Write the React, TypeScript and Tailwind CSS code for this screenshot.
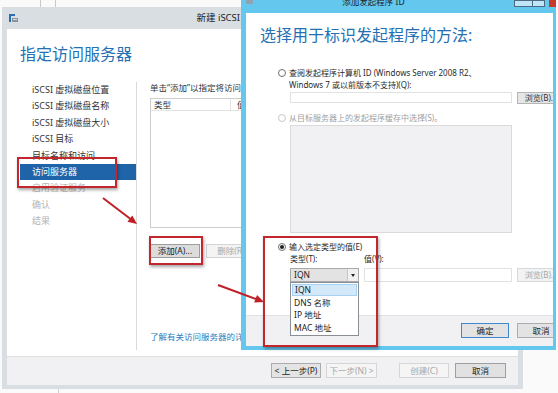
import React from "react";

function Radio({ on, dim }: { on?: boolean; dim?: boolean }) {
  return (
    <span
      className={
        dim
          ? "mt-[2px] w-[8px] h-[8px] rounded-full border border-[#c9c9c9] bg-white flex items-center justify-center flex-none"
          : "mt-[2px] w-[8px] h-[8px] rounded-full border border-[#707070] bg-white flex items-center justify-center flex-none"
      }
    >
      {on && <span className="w-[4px] h-[4px] rounded-full bg-[#1e1e1e]" />}
    </span>
  );
}

export default function App() {
  const navItems = [
    { t: "iSCSI 虚拟磁盘位置" },
    { t: "iSCSI 虚拟磁盘名称" },
    { t: "iSCSI 虚拟磁盘大小" },
    { t: "iSCSI 目标" },
    { t: "目标名称和访问" },
    { t: "访问服务器", sel: true },
    { t: "启用验证服务", dim: true },
    { t: "确认", dim: true },
    { t: "结果", dim: true },
  ];

  return (
    <div className="relative w-[558px] h-[393px] overflow-hidden bg-[#fafafa] font-['Noto_Sans','Noto_Sans_CJK_SC',sans-serif] text-[#1e1e1e]">
      {/* background marks */}
      <div className="absolute left-[40px] top-0 w-px h-[7px] bg-[#c8c8c8]" />
      <div className="absolute left-[55px] top-0 w-px h-[7px] bg-[#c8c8c8]" />
      <div className="absolute left-[58px] top-[389px] w-px h-[4px] bg-[#d0d0d0]" />

      {/* Main wizard window */}
      <div className="absolute left-[2px] top-[7px] w-[521px] h-[382px] bg-[#d9dee3] flex flex-col">
        <div className="h-[22px] flex items-center pl-[7px]">
          <svg width="10" height="9" viewBox="0 0 10 9" className="flex-none">
            <rect x="0" y="0" width="2" height="8" fill="#2a6fb5" />
            <rect x="0" y="0" width="6" height="2" fill="#2a6fb5" />
            <rect x="3" y="4" width="6" height="4" fill="#8a949e" />
            <rect x="4" y="5" width="4" height="1" fill="#d8dde2" />
          </svg>
          <div className="flex-1 text-center pr-[46px] text-[9.5px] leading-[12px] text-[#222]">
            新建 iSCSI 虚拟磁盘向导
          </div>
        </div>
        <div className="flex-1 mx-[5px] mb-[4px] bg-white flex flex-col">
          <div className="flex-1 flex flex-col pl-[13px]">
            <div className="h-[53px] pt-[15px] text-[16px] leading-[20px] text-[#2470b3]">
              指定访问服务器
            </div>
            <div className="flex h-[268px]">
              <div className="w-[117px] flex-none border-r border-[#dadada] flex flex-col">
                {navItems.map((n) => (
                  <div
                    key={n.t}
                    className={
                      n.sel
                        ? "h-[16.4px] leading-[16.4px] pl-[12px] text-[9px] bg-[#1f64a8] text-white"
                        : n.dim
                        ? "h-[16.4px] leading-[16.4px] pl-[12px] text-[9px] text-[#b4b4b4]"
                        : "h-[16.4px] leading-[16.4px] pl-[12px] text-[9px] text-[#333]"
                    }
                  >
                    {n.t}
                  </div>
                ))}
              </div>
              <div className="flex-1 flex flex-col pl-[13px] overflow-hidden">
                <div className="h-[12px] leading-[12px] text-[8.5px] text-[#333] whitespace-nowrap">
                  单击“添加”以指定将访问此 iSCSI 虚拟磁盘的 iSCSI 发起程序。
                </div>
                <div className="mt-[4px] w-[360px] h-[130px] flex-none border border-[#cdcdcd] bg-white">
                  <div className="flex h-[12px] border-b border-[#e3e3e3] text-[8.5px] leading-[11px] text-[#333]">
                    <div className="w-[80px] pl-[3px] border-r border-[#e3e3e3]">类型</div>
                    <div className="pl-[6px]">值</div>
                  </div>
                </div>
                <div className="mt-[16px] flex gap-[6px]">
                  <div className="w-[50px] h-[14px] flex-none border border-[#9d9d9d] bg-[#dcdcdc] text-[8.5px] leading-[12px] text-center text-[#222]">
                    添加(A)...
                  </div>
                  <div className="w-[50px] h-[14px] flex-none border border-[#d4d4d4] bg-[#f4f4f4] text-[8.5px] leading-[12px] text-center text-[#a8a8a8]">
                    删除(R)
                  </div>
                </div>
                <div className="flex-1" />
                <div className="mb-[7px] h-[12px] leading-[12px] text-[8.5px] text-[#2b7bbd] whitespace-nowrap">
                  了解有关访问服务器的详细信息
                </div>
              </div>
            </div>
            <div className="h-[6px]" />
          </div>
          <div className="h-[29px] flex-none bg-[#f1f0f2] border-t border-[#dedede] flex justify-end items-start pt-[6px] pr-[12px]">
            <div className="w-[50px] h-[15px] border border-[#acacac] bg-[#e4e4e4] text-[8.5px] leading-[13px] text-center text-[#222]">
              &lt; 上一步(P)
            </div>
            <div className="ml-[5px] w-[51px] h-[15px] border border-[#d6d6d6] bg-[#f5f5f5] text-[8.5px] leading-[13px] text-center text-[#a6a6a6]">
              下一步(N) &gt;
            </div>
            <div className="ml-[22px] w-[50px] h-[15px] border border-[#d6d6d6] bg-[#f5f5f5] text-[8.5px] leading-[13px] text-center text-[#a6a6a6]">
              创建(C)
            </div>
            <div className="ml-[6px] w-[51px] h-[15px] border border-[#9f9f9f] bg-[#e1e1e1] text-[8.5px] leading-[13px] text-center text-[#222]">
              取消
            </div>
          </div>
        </div>
      </div>

      {/* Add initiator ID dialog */}
      <div className="absolute left-[241px] top-0 w-[315px] h-[350px] bg-[#63c7ee] flex flex-col pl-[5px] pr-[3px] pb-[4px]">
        <div className="h-[13px] flex-none relative flex items-start">
          <svg width="8" height="5" viewBox="0 0 8 5" className="flex-none">
            <rect x="0" y="0" width="7" height="4" fill="#8fa3b3" />
          </svg>
          <div className="flex-1 text-center pr-[60px] -mt-[4px] text-[8.5px] leading-[12px] text-[#1e1e1e]">
            添加发起程序 ID
          </div>
          <div className="absolute right-[-3px] top-0 flex">
            <div className="w-[19px] h-[7px] border border-[#4d6b80] bg-[#bfe6f7]" />
            <div className="w-[12px] h-[7px] border border-l-0 border-[#4d6b80] bg-[#bfe6f7]" />
            <div className="ml-[4px] w-[7px] h-[7px] bg-[#c8382b]" />
          </div>
        </div>
        <div className="flex-1 bg-white flex flex-col overflow-hidden">
          <div className="flex-1 flex flex-col">
            <div className="pl-[14px] pt-[12px] h-[32px] text-[16px] leading-[20px] text-[#2470b3] whitespace-nowrap">
              选择用于标识发起程序的方法:
            </div>
            <div className="pl-[32px] mt-[22px] flex flex-col text-[8px] leading-[12px]">
              <div className="flex gap-[3px] items-start">
                <Radio />
                <div className="text-[#2a2a2a] whitespace-nowrap">
                  <div className="h-[12px]">查阅发起程序计算机 ID (Windows Server 2008 R2、</div>
                  <div className="h-[12px]">Windows 7 或以前版本不支持)(Q):</div>
                </div>
              </div>
              <div className="ml-[12px] mt-[1px] flex gap-[5px]">
                <div className="w-[222px] h-[11px] flex-none border border-[#e2e2e2] bg-white" />
                <div className="w-[48px] h-[12px] flex-none border border-[#b5b5b5] bg-[#e6e6e6] text-[8px] leading-[10px] text-center text-[#333]">
                  浏览(B)...
                </div>
              </div>
              <div className="mt-[8px] flex gap-[3px] items-start">
                <Radio dim />
                <div className="h-[12px] text-[#a0a0a0] whitespace-nowrap">从目标服务器上的发起程序缓存中选择(S)。</div>
              </div>
              <div className="ml-[12px] mt-[1px] w-[222px] h-[108px] flex-none border border-[#dadada] bg-[#f1f0f2]" />
              <div className="mt-[8px] flex gap-[3px] items-start">
                <Radio on />
                <div className="h-[12px] text-[#2a2a2a] whitespace-nowrap">输入选定类型的值(E)</div>
              </div>
              <div className="ml-[12px] h-[12px] flex text-[#2a2a2a]">
                <div className="w-[74px]">类型(T):</div>
                <div>值(V):</div>
              </div>
              <div className="ml-[12px] mt-[3px] flex gap-[5px]">
                <div className="relative w-[69px] h-[14px] flex-none border border-[#a9a9a9] bg-[#e3e3e3] flex">
                  <div className="flex-1 pl-[3px] text-[8.5px] leading-[12px] text-[#222]">IQN</div>
                  <div className="w-[11px] h-full border-l border-[#c8c8c8] bg-[#f0f0f0] flex items-center justify-center">
                    <div className="w-0 h-0 border-l-[2.5px] border-r-[2.5px] border-t-[3px] border-l-transparent border-r-transparent border-t-[#222]" />
                  </div>
                  <div className="absolute left-[-1px] top-[13px] w-[69px] h-[54px] border border-[#8a8f96] bg-white flex flex-col pt-[1px] text-[8.5px] leading-[12px] text-[#222]">
                    <div className="h-[12px] mx-[1px] pl-[2px] bg-[#d3e9fa] border border-[#a8d2f2] leading-[10px]">IQN</div>
                    <div className="h-[13px] pl-[3px] leading-[13px]">DNS 名称</div>
                    <div className="h-[12px] pl-[3px]">IP 地址</div>
                    <div className="h-[13px] pl-[3px] leading-[13px]">MAC 地址</div>
                  </div>
                </div>
                <div className="w-[148px] h-[14px] flex-none border border-[#e2e2e2] bg-white" />
                <div className="w-[48px] h-[14px] flex-none border border-[#d8d8d8] bg-[#f3f3f3] text-[8px] leading-[12px] text-center text-[#a6a6a6]">
                  浏览(B)...
                </div>
              </div>
            </div>
          </div>
          <div className="h-[31px] flex-none bg-[#f1f0f2] border-t border-[#e2e2e2] flex items-start pt-[7px] pl-[215px] gap-[8px]">
            <div className="w-[48px] h-[15px] flex-none border border-[#3d8ad0] bg-[#e3e3e3] text-[8.5px] leading-[13px] text-center text-[#222]">
              确定
            </div>
            <div className="w-[48px] h-[15px] flex-none border border-[#adadad] bg-[#e3e3e3] text-[8.5px] leading-[13px] text-center text-[#222]">
              取消
            </div>
          </div>
        </div>
      </div>

      {/* Annotation rectangles */}
      <div className="absolute left-[17px] top-[157px] w-[100px] h-[31px] border-2 border-[#c1272d] shadow-[1px_2px_3px_rgba(0,0,0,0.35)]" />
      <div className="absolute left-[149px] top-[236px] w-[54px] h-[29px] border-2 border-[#c1272d] shadow-[1px_2px_3px_rgba(0,0,0,0.35)]" />
      <div className="absolute left-[263px] top-[236px] w-[115px] h-[111px] border-2 border-[#c1272d] shadow-[1px_2px_3px_rgba(0,0,0,0.35)]" />

      {/* Arrows */}
      <svg className="absolute left-0 top-0" width="558" height="393" viewBox="0 0 558 393">
        <line x1="103" y1="198" x2="130.5" y2="219" stroke="#bf2026" strokeWidth="2" />
        <polygon points="137,224 127.4,221.7 132.3,215.4" fill="#bf2026" />
        <line x1="218" y1="285" x2="256" y2="299" stroke="#bf2026" strokeWidth="2" />
        <polygon points="264,302 254.2,302.6 257,295.1" fill="#bf2026" />
      </svg>
    </div>
  );
}
